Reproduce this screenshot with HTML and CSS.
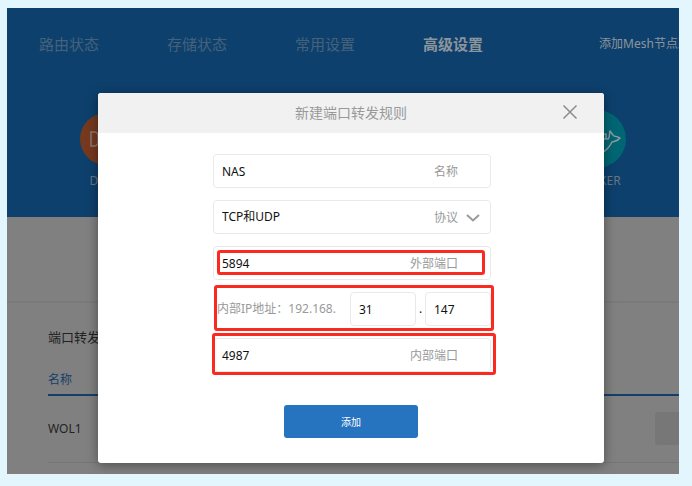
FILE: index.html
```html
<!DOCTYPE html>
<html lang="zh-CN">
<head>
<meta charset="utf-8">
<title>新建端口转发规则</title>
<link rel="stylesheet" href="styles.css">
</head>
<body>
<div class="stage">
  <header class="banner">
    <nav class="nav">
      <a href="#">路由状态</a>
      <a href="#">存储状态</a>
      <a href="#">常用设置</a>
      <a href="#" class="active">高级设置</a>
      <a href="#" class="mesh">添加Mesh节点路</a>
    </nav>
    <div class="apps">
      <a href="#" class="app">
        <svg class="disc" viewBox="0 0 60 60" aria-hidden="true">
          <circle cx="30" cy="30" r="26" fill="#75391f"/>
          <path d="M15 23h3q4 0 4 4v6q0 4-4 4h-3z" fill="none" stroke="#8c7a70" stroke-width="1.5"/>
        </svg>
        <span>DDNS</span>
      </a>
      <a href="#" class="app">
        <svg class="disc" viewBox="0 0 60 60" aria-hidden="true">
          <circle cx="30" cy="30" r="29" fill="#006674"/>
          <path d="M35 25h4v5h2c2-1 1-5 2-8l3 4c1 2 4 1 7 3-2 3-5 3-8 4-2 4-5 8-10 11-8 4-18 0-20-14h24" fill="none" stroke="#8a9c9e" stroke-width="1.5" stroke-linejoin="round"/>
        </svg>
        <span>DOCKER</span>
      </a>
    </div>
  </header>
  <main class="content">
    <div class="strip"></div>
    <section class="rules">
      <h2>端口转发规则</h2>
      <table>
        <thead><tr><th scope="col">名称</th><td></td></tr></thead>
        <tbody><tr><td>WOL1</td><td class="ops"><button type="button" class="ghost" aria-label="删除"></button></td></tr></tbody>
      </table>
    </section>
  </main>
  <div class="overlay">
    <form class="dialog" role="dialog" aria-labelledby="dialog-title">
      <div class="dialog-head">
        <h1 id="dialog-title">新建端口转发规则</h1>
        <button type="button" class="close" aria-label="关闭">
          <svg viewBox="0 0 16 16" aria-hidden="true"><path d="M1.500 1.500l13 13M14.500 1.500l-13 13" stroke="#8c8c8c" stroke-width="1.500" fill="none"/></svg>
        </button>
      </div>
      <div class="fields">
        <div class="field">
          <input id="name" type="text" value="NAS">
          <label for="name">名称</label>
        </div>
        <div class="field">
          <select id="protocol"><option>TCP和UDP</option></select>
          <label for="protocol">协议</label>
          <svg class="chevron" viewBox="0 0 14 8" aria-hidden="true"><path d="M1 1l6 5.500L13 1" stroke="#9a9a9a" stroke-width="2" fill="none"/></svg>
        </div>
        <div class="field">
          <input id="outer" type="text" value="5894">
          <label for="outer">外部端口</label>
          <span class="mark mark-outer"></span>
        </div>
        <div class="address">
          <label for="ip3">内部IP地址：192.168.</label>
          <input id="ip3" type="text" value="31">
          <span class="dot">.</span>
          <input type="text" value="147" aria-label="内部IP地址">
          <span class="mark mark-address"></span>
        </div>
        <div class="field">
          <input id="inner" type="text" value="4987">
          <label for="inner">内部端口</label>
          <span class="mark mark-inner"></span>
        </div>
      </div>
      <button type="button" class="submit">添加</button>
    </form>
  </div>
</div>
</body>
</html>
```
FILE: styles.css
```css
* { box-sizing: border-box; }

body {
  margin: 0;
  min-height: 100vh;
  padding: 8px 13px 12px 7px;
  display: flex;
  background: #e4f6fd;
  font: 12px/18px "Noto Sans", "Noto Sans CJK SC", sans-serif;
  color: #222;
}

a { color: inherit; text-decoration: none; }
h1, h2 { margin: 0; font-weight: 400; }
input, select, button { font: inherit; color: inherit; margin: 0; }

.stage {
  position: relative;
  flex: 1;
  min-width: 0;
  overflow: hidden;
  display: flex;
  flex-direction: column;
  background: #808080;
}

.banner { height: 209px; background: #0d406d; color: #687683; }

.nav {
  display: flex;
  align-items: center;
  gap: 68px;
  height: 72px;
  padding-left: 32px;
  font-size: 15px;
  white-space: nowrap;
  color: #46627b;
}
.nav a { flex: none; }
.nav .active { font-weight: 700; color: #8d959c; }
.nav .mesh { margin-left: 48px; font-size: 12px; color: #8d959c; }

.apps {
  display: flex;
  justify-content: space-between;
  padding: 29px 52px 0 69px;
}
.app {
  display: flex;
  flex-direction: column;
  align-items: center;
  gap: 3px;
  width: 60px;
}
.disc { width: 60px; height: 60px; }

.strip { height: 86px; border-bottom: 2px solid #7a7a7a; }

.rules { padding: 24px 0 0 41px; }
.rules h2 { font-size: 13px; line-height: 20px; }

table { width: 100%; border-collapse: collapse; }
th, td { padding: 0; text-align: left; font-weight: 400; }
thead tr { height: 48px; border-bottom: 2px solid #153f68; color: #153f68; }
thead th { padding-top: 18px; }
tbody tr { height: 67px; border-bottom: 1px solid #767676; }
.ops { width: 24px; }
.ghost {
  display: block;
  width: 80px;
  height: 33px;
  margin-right: -56px;
  border: 0;
  border-radius: 3px;
  background: #777;
}

.overlay {
  position: absolute;
  inset: 0;
  display: flex;
  padding: 85px 75px 11px 91px;
}
.dialog {
  flex: 1;
  overflow: hidden;
  display: flex;
  flex-direction: column;
  align-items: center;
  border-radius: 3px;
  background: #fff;
  box-shadow: 0 2px 12px rgba(0, 0, 0, 0.4);
}
.dialog-head {
  position: relative;
  align-self: stretch;
  display: flex;
  align-items: center;
  justify-content: center;
  height: 40px;
  background: #f1f1f1;
  color: #999;
}
.dialog-head h1 { font-size: 14px; line-height: 20px; }
.close {
  position: absolute;
  top: 11px;
  right: 26px;
  padding: 0;
  border: 0;
  background: none;
}
.close svg { display: block; width: 16px; height: 16px; }

.fields {
  display: flex;
  flex-direction: column;
  gap: 12px;
  width: 278px;
  margin: 21px 0 0 2px;
}
.field, .address {
  position: relative;
  display: flex;
  align-items: center;
  height: 34px;
}
.field, .address input { border: 1px solid #e9e9e9; border-radius: 4px; }
.field { padding-right: 32px; }
.fields label { color: #999; white-space: nowrap; }
.field label { padding-top: 2px; }
.fields input, .fields select {
  min-width: 0;
  height: 100%;
  padding: 0 8px;
  background: none;
  color: #111;
  outline: 0;
}
.field input, .field select { flex: 1; border: 0; appearance: none; }
.chevron {
  position: absolute;
  top: 13px;
  right: 10px;
  width: 14px;
  height: 8px;
  pointer-events: none;
}
.address { padding-left: 4px; }
.address label { flex: 1; }
.address input { width: 66px; }
.dot { width: 9px; text-align: center; }

.mark {
  position: absolute;
  border: 3px solid #fb2a20;
  border-radius: 3px;
  pointer-events: none;
}
.mark-outer { inset: 3px 5px 4px 3px; }
.mark-address { inset: -7px -3px -5px 1px; }
.mark-inner { inset: -6px -6px -4px -2px; }

.submit {
  width: 134px;
  height: 33px;
  margin-top: 33px;
  border: 0;
  border-radius: 3px;
  background: #2673c0;
  color: #fff;
  font-size: 10px;
}
```
